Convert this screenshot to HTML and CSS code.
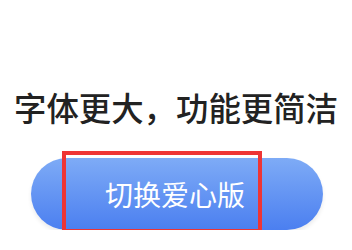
FILE: index.html
```html
<!DOCTYPE html>
<html lang="zh-CN">
<head>
    <meta charset="UTF-8">
    <meta name="viewport" content="width=device-width, initial-scale=1.0">
    <title>切换爱心版</title>
    <link rel="stylesheet" href="styles.css">
</head>
<body>
    <h1 class="title">字体更大，功能更简洁</h1>
    <div class="switch">
        <button class="switch-btn">切换爱心版</button>
        <div class="mark"></div>
    </div>
</body>
</html>
```

FILE: styles.css
```css
body {
    margin: 0;
    background-color: #ffffff;
    font-family: "Noto Sans CJK SC", "Noto Sans", sans-serif;
}
.title {
    margin: 0;
    padding-top: 88px;
    font-size: 32.4px;
    line-height: 38px;
    font-weight: 500;
    color: #222222;
    text-align: center;
}
.switch {
    position: relative;
    margin: 32px 0 0 31px;
    width: 292px;
}
.switch-btn {
    display: block;
    width: 100%;
    height: 72px;
    padding: 0 0 0 74px;
    border: none;
    border-radius: 36px;
    background: linear-gradient(to bottom, #7eabf6, #4b7ff0);
    box-shadow: 0 3px 4px rgba(0, 0, 0, 0.08);
    color: #ffffff;
    font-family: inherit;
    font-size: 28px;
    text-align: left;
}
.mark {
    position: absolute;
    left: 31px;
    top: -7px;
    width: 192px;
    height: 74px;
    border: 4px solid #ee3535;
}
```
